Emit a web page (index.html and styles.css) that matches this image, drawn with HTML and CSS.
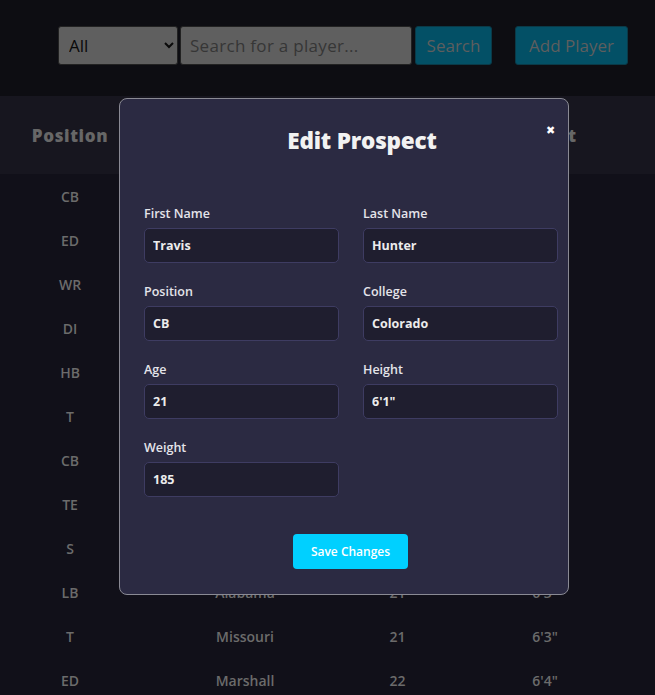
FILE: index.html
```html
<!DOCTYPE html>
<html lang="en">
<head>
<meta charset="utf-8">
<title>Prospects</title>
<link rel="stylesheet" href="styles.css">
</head>
<body>
<div class="page">
  <header class="toolbar">
    <div class="search-group">
      <select class="filter"><option>All</option></select>
      <input class="search-input" type="text" placeholder="Search for a player...">
      <button class="btn-dim search-btn">Search</button>
    </div>
    <button class="btn-dim add">Add Player</button>
  </header>

  <table class="prospects">
    <thead>
      <tr><th class="c-pos">Position</th><th class="c-col">College</th><th class="c-age">Age</th><th class="c-ht">Height</th></tr>
    </thead>
    <tbody>
      <tr><td>CB</td><td>Colorado</td><td>21</td><td>6'1"</td></tr>
      <tr><td>ED</td><td>Penn State</td><td>20</td><td>6'3"</td></tr>
      <tr><td>WR</td><td>Arizona</td><td>21</td><td>6'4"</td></tr>
      <tr><td>DI</td><td>Michigan</td><td>21</td><td>6'3"</td></tr>
      <tr><td>HB</td><td>Boise State</td><td>21</td><td>5'11"</td></tr>
      <tr><td>T</td><td>LSU</td><td>20</td><td>6'6"</td></tr>
      <tr><td>CB</td><td>Michigan</td><td>21</td><td>6'0"</td></tr>
      <tr><td>TE</td><td>Penn State</td><td>21</td><td>6'3"</td></tr>
      <tr><td>S</td><td>South Carolina</td><td>21</td><td>6'2"</td></tr>
      <tr><td>LB</td><td>Alabama</td><td>21</td><td>6'3"</td></tr>
      <tr><td>T</td><td>Missouri</td><td>21</td><td>6'3"</td></tr>
      <tr><td>ED</td><td>Marshall</td><td>22</td><td>6'4"</td></tr>
    </tbody>
  </table>
</div>

<div class="modal">
  <button class="close">✖</button>
  <h2 class="modal-title">Edit Prospect</h2>
  <form class="form-grid">
    <label class="field"><span class="label">First Name</span><input class="field-input" value="Travis"></label>
    <label class="field"><span class="label">Last Name</span><input class="field-input" value="Hunter"></label>
    <label class="field"><span class="label">Position</span><input class="field-input" value="CB"></label>
    <label class="field"><span class="label">College</span><input class="field-input" value="Colorado"></label>
    <label class="field"><span class="label">Age</span><input class="field-input" value="21"></label>
    <label class="field"><span class="label">Height</span><input class="field-input" value="6'1&quot;"></label>
    <label class="field"><span class="label">Weight</span><input class="field-input" value="185"></label>
  </form>
  <div class="actions"><button class="save">Save Changes</button></div>
</div>
</body>
</html>
```
FILE: styles.css
```css
* { box-sizing: border-box; }
html, body { margin: 0; padding: 0; }
body {
  background: #111019;
  font-family: "Open Sans", "Noto Sans", sans-serif;
  width: 655px;
  height: 695px;
  overflow: hidden;
}
.toolbar {
  background: #0d0d12;
  height: 96px;
  display: flex;
  align-items: flex-start;
  padding: 26px 0 0 58px;
  gap: 23px;
}
.search-group { display: flex; gap: 2px; }
.filter {
  width: 120px;
  height: 39px;
  background: #5f5f5f;
  border: 1px solid #222;
  border-radius: 3px;
  font-family: inherit;
  font-size: 17px;
  color: #0a0a0a;
  padding: 0 6px;
}
.search-input {
  width: 232px;
  height: 39px;
  background: #5f5f5f;
  border: 1px solid #222;
  border-radius: 3px;
  font-family: inherit;
  font-size: 17px;
  letter-spacing: 0.3px;
  padding: 0 9px;
  color: #222;
}
.search-input::placeholder { color: #363636; }
.btn-dim {
  height: 39px;
  background: #035066;
  border: 1px solid #0a3a48;
  border-radius: 3px;
  color: #5e5e5e;
  font-family: inherit;
  font-size: 17px;
  padding: 0;
  text-align: center;
}
.search-btn { width: 77px; margin-left: 1px; }
.add { width: 113px; }

.prospects {
  border-collapse: collapse;
  width: 655px;
  table-layout: fixed;
}
.prospects thead tr { background: #17161f; height: 78px; }
.prospects th {
  color: #676767;
  font-size: 17px;
  font-weight: 800;
  letter-spacing: 0.6px;
  text-align: center;
}
.prospects td {
  height: 44px;
  color: #6b6b6b;
  font-size: 14px;
  font-weight: 600;
  text-align: center;
  padding: 0;
}
.prospects th:last-child, .prospects td:last-child { padding-right: 10px; }
.c-pos { width: 140px; }
.c-col { width: 210px; }
.c-age { width: 95px; }
.c-ht { width: 210px; }

.modal {
  position: fixed;
  left: 119px;
  top: 98px;
  width: 450px;
  height: 497px;
  background: #2b2a42;
  border: 1px solid #8a8a94;
  border-radius: 8px;
  padding: 26px 0 24px 24px;
  display: flex;
  flex-direction: column;
}
.close {
  position: absolute;
  top: 21px;
  right: 9px;
  background: none;
  border: none;
  color: #ffffff;
  font-size: 11px;
  padding: 4px;
}
.modal-title {
  margin: 0;
  text-align: center;
  color: #f2f2f2;
  font-size: 22.5px;
  font-weight: 800;
  line-height: 32px;
  padding-left: 12px;
  letter-spacing: -0.2px;
}
.form-grid {
  margin-top: 48px;
  display: grid;
  grid-template-columns: 195px 195px;
  column-gap: 24px;
  row-gap: 20px;
}
.field { display: flex; flex-direction: column; gap: 5px; }
.label {
  color: #e4e4ea;
  font-size: 12.5px;
  font-weight: 600;
  line-height: 18px;
}
.field-input {
  height: 35px;
  background: #1f1e2f;
  border: 1px solid #3e3c62;
  border-radius: 5px;
  color: #ececec;
  font-family: inherit;
  font-size: 12.5px;
  font-weight: 700;
  padding: 0 8px;
}
.actions {
  margin-top: 37px;
  display: flex;
  justify-content: center;
  padding-right: 11px;
}
.save {
  width: 115px;
  height: 35px;
  background: #00d0ff;
  border: none;
  border-radius: 4px;
  color: #ffffff;
  font-family: inherit;
  font-size: 12px;
  font-weight: 600;
}
```
